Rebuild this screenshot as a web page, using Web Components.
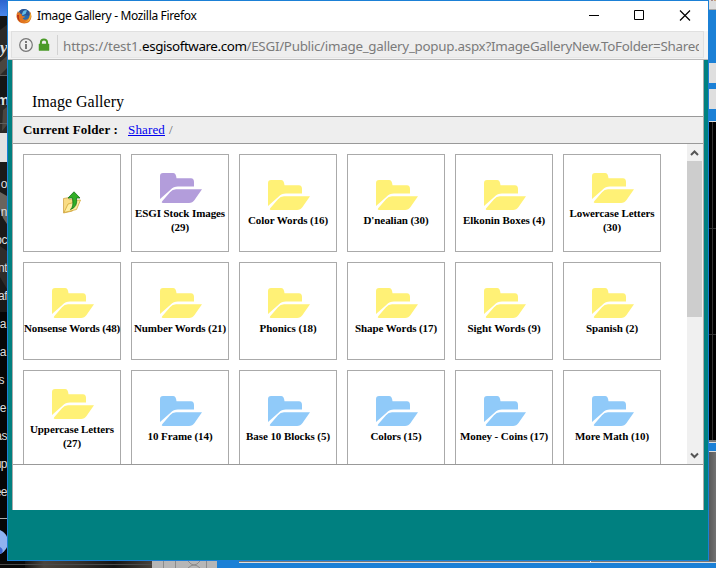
<!DOCTYPE html>
<html lang="en">
<head>
<meta charset="utf-8">
<title>Image Gallery</title>
<style>
html,body{margin:0;width:716px;height:568px;overflow:hidden;background:#000}
</style>
</head>
<body>
<gallery-desktop>
  <browser-window>
    <gallery-page></gallery-page>
  </browser-window>
</gallery-desktop>
<script>
const make = (name, html, init) => customElements.define(name, class extends HTMLElement {
  connectedCallback() {
    if (this.shadowRoot) return;
    const t = document.createElement('template');
    t.innerHTML = html;
    this.attachShadow({mode: 'open'}).append(t.content.cloneNode(true));
    if (init) init.call(this, this.shadowRoot);
  }
});

/* Desktop seen around the window */
make('gallery-desktop', `<style>
:host{display:block;position:relative;width:716px;height:568px;overflow:hidden;background:#101010}
svg{position:absolute;left:0;top:0}
.left{position:absolute;left:0;top:0;width:7px;height:560px;overflow:hidden;color:#dedede;font:12px/16px "Liberation Sans",Arial,sans-serif}
.left span{position:absolute;right:0;letter-spacing:-.5px}
</style>
<svg width="716" height="568">
 <defs>
  <linearGradient id="sky" x2="0" y2="1"><stop offset="0" stop-color="#2b64cf"/><stop offset="1" stop-color="#4a87ea"/></linearGradient>
  <linearGradient id="gr" x2="1"><stop offset="0" stop-color="#555"/><stop offset="1" stop-color="#727272"/></linearGradient>
  <linearGradient id="rk"><stop offset="0" stop-color="#161514"/><stop offset=".15" stop-color="#4c463e"/><stop offset=".4" stop-color="#37332e"/><stop offset=".7" stop-color="#141414"/><stop offset="1" stop-color="#47413a"/></linearGradient>
 </defs>
 <rect width="8" height="16" fill="url(#sky)"/>
 <rect y="16" width="8" height="117" fill="#2c2a28"/>
 <path d="M0 16h8v8l-8 6zM0 76h8v28H0z" fill="#151515"/>
 <path d="M0 62l7-6v12l-7 7zM3 110l4-3v18l-5 6z" fill="#4b4640"/>
 <path d="M0 75.500h7M0 123.500h7" stroke="#5e5e5e"/>
 <rect y="133" width="8" height="29" fill="#e3e3e3"/>
 <rect y="162" width="8" height="150" fill="#1b1a19"/>
 <path d="M0 192l7 4v28l-4-6-3-9z" fill="#69645d"/>
 <path d="M0 246l7 5v38l-7-12z" fill="#302d2a"/>
 <rect y="312" width="8" height="250" fill="#060606"/>
 <path d="M0 518.500h7" stroke="#aaa"/>
 <circle cx="-5" cy="542" r="13" fill="#8fb2f0"/><path d="M0 547q4 2 2 6l-2 1z" fill="#3e67d3"/>
 <rect y="561" width="152" height="7" fill="#090909"/>
 <rect x="25" y="561" width="127" height="7" fill="url(#rk)"/>
 <path d="M0 564.500h152" stroke="#4a4a4a"/>
 <rect x="152" y="561" width="65" height="7" fill="#b6b6b6"/>
 <path d="M163.500 561v7M175.500 561v7M206.500 561v7M188 561q6 8 12 0M188 568q6-6 12 0" stroke="#8b8b8b" fill="none"/>
 <rect x="217" y="561" width="499" height="7" fill="#1b80d6"/>
 <rect x="239" y="561" width="477" height="1" fill="#777"/>
 <rect x="239" y="562" width="477" height="1" fill="#dedede"/>
 <rect x="590" y="561" width="1" height="1" fill="#eee"/>
 <rect x="708" width="8" height="122" fill="#1b80d6"/>
 <rect x="708" width="8" height="9" fill="#dedede"/><rect x="708" y="9" width="8" height="1" fill="#aaa"/>
 <path d="M711 0h2v1h-2z" fill="#a88"/><path d="M714 0h2v1h-2z" fill="#c9a27a"/>
 <rect x="708" y="63" width="8" height="20" fill="#dfdfdf"/><rect x="708" y="89" width="8" height="20" fill="#dfdfdf"/>
 <rect x="708" y="121" width="8" height="1" fill="#ddd"/>
 <rect x="708" y="122" width="8" height="318" fill="#000"/>
 <path d="M712.500 122v318M708 228.500h8M708 334.500h8" stroke="#333"/>
 <rect x="708" y="440" width="8" height="2" fill="#777"/><rect x="708" y="442" width="8" height="1" fill="#ddd"/>
 <rect x="708" y="443" width="8" height="8" fill="#1b80d6"/><rect x="708" y="451" width="8" height="1" fill="#ddd"/>
 <rect x="708" y="452" width="8" height="109" fill="url(#gr)"/>
</svg>
<div class="left">
<span style="top:38px;font:italic bold 17px 'Liberation Serif'">y</span><span style="top:92px;font-weight:bold;font-size:15px;right:-2px">m</span>
<span style="top:176px">o</span><span style="top:204px">n</span><span style="top:232px">oc</span><span style="top:260px">nt</span><span style="top:288px">af</span><span style="top:316px;right:1px">a</span><span style="top:344px;right:1px">a</span><span style="top:372px;right:3px">s</span><span style="top:400px;right:1px">e</span><span style="top:428px">as</span><span style="top:456px">up</span><span style="top:484px">ee</span>
</div>
<slot></slot>`);

/* Firefox popup: title bar, address bar, content */
make('browser-window', `<style>
:host{position:absolute;left:7px;top:0;width:702px;height:561px;box-sizing:border-box;border:1px solid #1b80d6;background:#008080;display:flex;flex-direction:column}
.title{height:30px;background:#fff;display:flex;align-items:center;color:#000;font:12px/16px "Noto Sans",sans-serif}
.logo{margin:-1px 5px 0 8px}
.btns{margin-left:auto}
.bar{height:29px;box-sizing:border-box;background:#f4f4f4;border-bottom:1px solid #bbb;padding:0 4px 1px 3px;display:flex}
.field{flex:1;min-width:0;background:#eee;border:1px solid #e0e0e0;border-bottom-color:#e6e6e6;box-sizing:border-box;display:flex;align-items:center;padding-right:4px}
.url{flex:1;min-width:0;overflow:hidden;white-space:nowrap;color:#7b7b7b;font:13.400px/22px "Noto Sans",sans-serif;display:flex;padding-top:2px}
b{font-weight:400;color:#000}
</style>
<div class="title">
 <svg class="logo" width="16" height="16" viewBox="0 0 16 16">
  <circle cx="8" cy="8" r="7" fill="#256bb0"/><path d="M3.500 3Q8-1 12.500 3l1 5-4-1-4 1z" fill="#2a5192"/>
  <path d="M7 3.500q2-2 4-1L9.500 6q-1.500 0-3 1.500l-.5-1.500z" fill="#63bce6"/>
  <path d="M2 3q-2 3-1.500 6Q2 15.500 8.200 15.500 15 15 15.500 8.500 15.600 5 13.500 3q1 4-.5 6.500Q11 12.500 8 11.500L6.500 10l2-.5L9 8.500 6 8 5.500 6 4 5.500 3.500 3.500 2.500 5z" fill="#e07420"/>
  <path d="M14.200 5Q16 9 13 12.500 11 14.500 8 14.300 13 13 13.500 9z" fill="#f4bd3a"/><path d="M1 7q0 5 4 7-3-3-2-7z" fill="#b93018"/>
 </svg><fit-text w="159.500">Image Gallery - Mozilla Firefox</fit-text>
 <svg class="btns" width="120" height="30" fill="none" stroke="#000"><path d="M1 14.500h10"/><path d="M46.500 9.500h9v9h-9z"/><path d="M92 9.500l10 10M102 9.500l-10 10" stroke-width="1.200"/></svg>
</div>
<div class="bar"><div class="field">
 <svg width="51" height="27"><circle cx="14" cy="14" r="6.300" fill="none" stroke="#777" stroke-width="1.200"/><path d="M13 10h2v2h-2zM13 13h2v5h-2z" fill="#777"/>
 <path d="M27 13h10v6.500H27z" fill="#4a9a28" stroke="#4a9a28" stroke-width=".5"/><path d="M28.900 13.500v-2a3.100 3.100 0 0 1 6.200 0v2" fill="none" stroke="#4a9a28" stroke-width="2"/>
 <path d="M45.500 4v20" stroke="#d2d2d2"/></svg>
 <div class="url"><fit-text w="79">https://test1.</fit-text><b><fit-text w="104.500">esgisoftware.com</fit-text></b><fit-text w="456.500">/ESGI/Public/image_gallery_popup.aspx?ImageGalleryNew.ToFolder=Shared</fit-text></div>
</div></div>
<slot></slot>`);

make('gallery-page', `<style>
:host{display:flex;flex-direction:column;width:692px;height:450px;margin-left:4px;box-sizing:border-box;border:solid #aaa;border-width:0 1px;background:#fff;color:#000;font-family:"Liberation Serif",serif}
h1{margin:0;height:56px;box-sizing:border-box;padding:33px 0 0 19px;font:16px/18px "Liberation Serif",serif}
.path{height:28px;box-sizing:border-box;background:#eee;border:solid #999;border-width:1px 0;padding:5px 0 0 10px;font-size:13px;line-height:16px;display:flex;color:#666}
b{color:#000;margin-right:10px}a{color:#00e;text-decoration:underline;margin-right:4px}
.view{height:321px;box-sizing:border-box;border-bottom:1px solid #999;display:flex;overflow:hidden}
.grid{width:638px;display:grid;grid-template-columns:repeat(6,98px);grid-auto-rows:98px;gap:10px;padding:10px;box-sizing:border-box;flex:none}
scroll-bar{margin-left:auto}
</style>
<h1><fit-text w="92">Image Gallery</fit-text></h1>
<div class="path"><b><fit-text w="95">Current Folder :</fit-text></b><a><fit-text w="37" style="text-decoration:underline">Shared</fit-text></a>/</div>
<div class="view"><div class="grid"></div><scroll-bar></scroll-bar></div>`, function (root) {
  const Y = '#fff176', B = '#90caf9', P = '#b39ddb';
  const rows = [
    [P, ['ESGI Stock Images', 90], ['(29)', 18]], [Y, ['Color Words (16)', 80]], [Y, ["D'nealian (30)", 65]],
    [Y, ['Elkonin Boxes (4)', 82]], [Y, ['Lowercase Letters', 85], ['(30)', 18]],
    [Y, ['Nonsense Words (48)', 96]], [Y, ['Number Words (21)', 92]], [Y, ['Phonics (18)', 57]],
    [Y, ['Shape Words (17)', 82]], [Y, ['Sight Words (9)', 73]], [Y, ['Spanish (2)', 52]],
    [Y, ['Uppercase Letters', 84], ['(27)', 18]], [B, ['10 Frame (14)', 65]], [B, ['Base 10 Blocks (5)', 84]],
    [B, ['Colors (15)', 51]], [B, ['Money - Coins (17)', 88]], [B, ['More Math (10)', 74]]
  ];
  root.querySelector('.grid').innerHTML = '<folder-tile up></folder-tile>' + rows.map(([c, ...l]) =>
    `<folder-tile color="${c}">${l.map(([t, w]) => `<fit-text w="${w}">${t}</fit-text>`).join('')}</folder-tile>`).join('');
});

make('folder-tile', `<style>
:host{display:flex;flex-direction:column;align-items:center;justify-content:center;box-sizing:border-box;border:1px solid #aaa;background:#fff;font:bold 11px/14px "Liberation Serif",serif;color:#000}
.f{margin:0 0 2px 2px}
.u{display:none}
:host([up]) .f{display:none}:host([up]) .u{display:block}
</style>
<svg class="f" width="42" height="32" viewBox="0 0 42 32"><path d="M0 27V4Q0 1 3 1H13Q16 1 16.500 6.200H31Q34 6.500 34 10V14.500H18Q13.500 14.500 10.500 17.800Z"/><path d="M16 17.300H42L34.500 28Q32.500 31 29 31H3Q1 30.800 2.200 29.300L10 20.200Q12.500 17.300 16 17.300Z"/></svg>
<svg class="u" width="20" height="24" viewBox="0 0 20 24"><path d="M1.500 7.500l5-.8 1 2 3-.8V20l-9 2z" fill="#f9dc84" stroke="#cfa54a" stroke-width=".8"/><path d="M2 21.500L6 13l4-1 2-2.500 6.500-.5-4 9.500z" fill="#ffeea0" stroke="#d3a83a" stroke-width=".8"/><path d="M8.500 18.500Q12 15.500 10.500 7H6l6-6.200L18 7h-3.500Q16 16 8.500 18.500z" fill="#31ae25" stroke="#16751a" stroke-width=".8"/></svg>
<slot></slot>`, function (root) {
  root.querySelector('.f').style.fill = this.getAttribute('color') || '';
});

make('scroll-bar', `<style>
:host{display:flex;flex-direction:column;width:16px;height:320px;background:#f0f0f0;margin-right:0}
.thumb{height:156px;background:#cdcdcd;margin:0 1px 0 0}
svg{flex:none}.down{margin-top:auto}
</style>
<svg width="16" height="17"><path d="M4 11l3.500-3.500L11 11" fill="none" stroke="#555" stroke-width="2"/></svg>
<div class="thumb"></div>
<svg class="down" width="16" height="17"><path d="M4 6.500l3.500 3.500L11 6.500" fill="none" stroke="#555" stroke-width="2"/></svg>`);

/* One run of text, tracked so that it takes the width given in "w".
   Defined last: it measures itself in the font its hosts have set. */
make('fit-text', `<style>:host{display:inline-block;white-space:pre}span{display:inline-block;text-decoration:inherit}</style><span><slot></slot></span>`, function (root) {
  const s = root.querySelector('span');
  const w = +this.getAttribute('w');
  const n = this.textContent.length;
  s.style.letterSpacing = ((w - s.getBoundingClientRect().width) / n) + 'px';
});
</script>
</body>
</html>
